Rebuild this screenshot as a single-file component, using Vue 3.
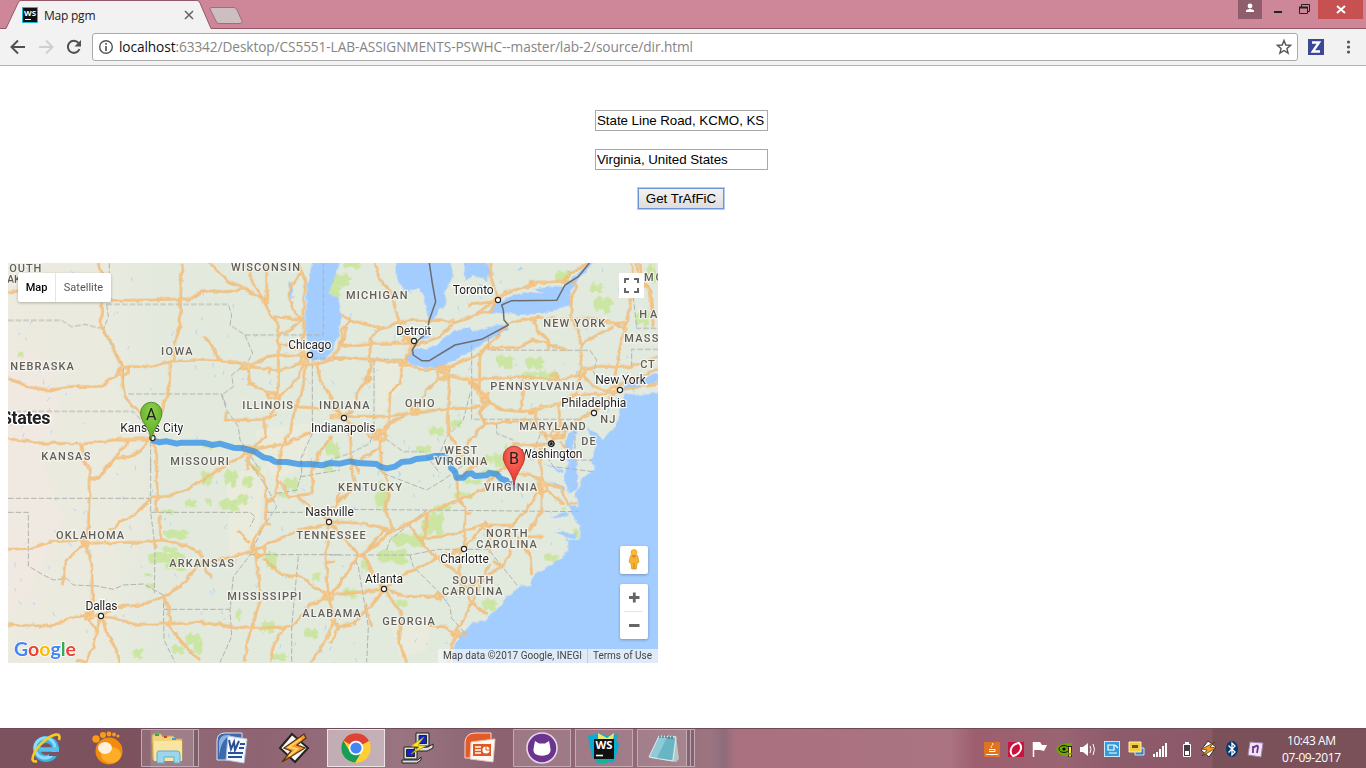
<script setup>
// Map geometry is kept in thirds of a pixel, in four tiles.
const tiles = [
  {
    t: 'translate(0 780)',
    roads: [
      'M24 97L60 92', 'M290 9C300 30 305 30 308 42', 'M305 126L303 200L330 240L345 280L368 320L368 370L375 410L400 440L425 465L445 520',
      'M330 121L440 120L540 117L580 115L605 92L680 95L735 86', 'M547 9L543 70L540 200L525 240L523 305',
      'M24 355L90 382L150 393L200 380L305 379L350 345L368 320L450 320L520 303L600 300L700 305L750 318',
      'M610 230L640 255L655 300', 'M510 305L508 380L490 440L465 500L452 535',
      'M24 535L100 548L245 552L340 540L450 535', 'M245 552L250 585L268 630',
      'M450 535L430 565L390 590L345 595', 'M385 540L345 595L310 630', 'M455 545L470 580L470 630',
      'M630 9L680 60L740 90L790 120L810 160L835 190L835 410', 'M735 9L760 70L800 130L800 9',
      'M815 170L905 178L870 210L835 225', 'M905 178L875 140L863 105L875 75L905 35L918 70L912 120L910 240L915 300', 'M895 9L905 35',
      'M735 318L835 330L870 325L915 305', 'M750 318L800 290L835 285L915 285', 'M745 320L748 370L800 395L835 410',
      'M835 250L910 270', 'M915 305L890 360L840 410L820 450L795 480L795 530L755 570',
      'M920 310L905 400L885 440L870 520L840 570L840 630', 'M680 455L675 480L700 480L795 478L830 460',
      'M885 440L960 445', 'M915 310L960 312L1000 290L1025 255L1040 200', 'M950 310L960 360L1030 470',
      'M755 570L860 550L935 515', 'M755 570L690 610L650 630', 'M755 570L745 600L740 630', 'M1000 530L960 570L940 630',
      'M355 325h30v18h-34z', 'M725 312h22v14h-20z', 'M800 398h35v16h-30z', 'M728 560h34v20h-30z', 'M902 280h18v30h-14z', 'M810 330v12', 'M490 420v25M355 540h90',
    ],
    borders: [
      'M328 9V120', 'M24 181L185 181L215 200L255 193L300 205', 'M320 133L685 133L695 165L690 195L735 225L970 225L970 10',
      'M320 133L325 170L310 210L370 320L370 390', 'M385 402L665 402L680 440', 'M24 454L400 454L440 500L452 535V630',
      'M735 225L758 280L740 310L695 345L700 380L665 405L680 450L715 500L720 540L780 630', 'M937 310L937 520L900 600L905 630', 'M937 295H1040',
    ],
    greens: [[60, 285, 20, 18], [320, 55, 10, 10], [625, 560, 30, 14], [770, 625, 30, 20], [1000, 570, 40, 50], [985, 620, 30, 40]],
  },
  {
    t: 'translate(990 780)',
    roads: [
      'M135 9L150 60L185 100L205 180L225 235L245 250', 'M480 9L485 60L505 118', 'M505 118L470 140L430 165L370 190L330 230L290 245L240 258',
      'M505 110L560 88L620 70L700 58L740 28L775 9', 'M415 135L490 125L530 95', 'M430 165L480 155L500 125', 'M35 165L60 180L150 205L245 180L370 183',
      'M60 180L35 210L30 260L0 300', 'M150 205L120 240L120 330L110 360L80 400L78 440L42 470', 'M30 260L120 250L245 250',
      'M0 295L120 297L220 308L270 328L340 330L450 280L490 240L535 190', 'M340 345L440 360L560 350L680 360L755 345',
      'M245 255L220 308L210 370L180 400L175 490L150 530', 'M450 270L448 380L460 410', 'M535 190L620 172L700 178L790 175L850 190L890 210',
      'M610 172L620 210L655 240L655 270', 'M460 265L560 262L610 240L655 250L710 270', 'M600 68L730 62L740 80L725 110L722 170L750 230L755 330',
      'M755 255L800 225L850 200', 'M905 9L910 80L885 210L870 260L860 320L850 375', 'M930 9L935 60L960 90L970 200', 'M890 210L880 190L830 188',
      'M345 345L360 380L355 420L355 520L400 590', 'M0 470L180 468L260 455L460 440L480 430L520 450L580 455L690 430L740 405L840 400L870 390',
      'M325 360L290 390L255 450L180 490L150 530', 'M370 350L410 355L455 405L485 435', 'M405 350L440 375L450 410', 'M680 360v-15h-20',
      'M580 360L582 390L570 450', 'M755 330L810 318L870 322L900 320L984 290', 'M755 340L790 380L840 395', 'M755 340L740 400L690 430L640 440L600 460',
      'M685 430L690 480L690 510L665 545', 'M465 440L445 460L470 490L590 480L655 530', 'M640 435L618 450L615 480L650 540',
      'M665 545L700 520L760 470L790 455L870 390L984 370', 'M470 488L420 540L375 600', 'M665 550L600 555L555 550L520 600', 'M630 560L632 630', 'M690 545L740 600',
      'M42 470L60 500L65 600L90 640', 'M0 470L40 470', 'M42 480L130 530L150 530L155 640', 'M155 560L90 600', 'M325 320h32v35h-32zM342 320v40M325 337h32',
      'M245 445h20v18h-20zM255 440v25', 'M135 515h30v22h-30zM145 520l10 25l16-20', 'M208 300h22v16h-22z', 'M215 240L235 230L250 250L235 280', 'M430 375L455 410L475 400L465 440L445 390',
      'M115 345l8 12l-12 12l-10-10z', 'M830 390l20-12l20 12l-20 12z', 'M750 325h18v15h-22z', 'M0 440L40 470M670 510h30v20h-40z', 'M920 9L925 60', 'M850 375L900 365L984 325',
    ],
    borders: [
      'M0 292L220 300', 'M132 300V510', 'M425 255V478H750L775 455', 'M475 230V270L780 271L800 300L790 335L810 370', 'M910 110L920 205L984 205', 'M905 320V268H984',
      'M420 400L400 480L350 530L330 580L290 600', 'M165 535L220 575L280 575L330 640', 'M130 510L120 550L60 580L0 600', 'M735 480V600H785', 'M500 490V520L550 540', 'M640 500L600 600',
    ],
    greens: [
      [30, 60, 70, 40], [10, 90, 50, 50], [70, 15, 55, 20], [225, 35, 40, 45], [700, 50, 50, 35], [800, 85, 45, 35], [820, 135, 60, 50], [940, 175, 40, 50],
      [525, 305, 55, 45], [615, 310, 60, 40], [600, 345, 50, 22], [670, 350, 40, 25], [640, 345, 30, 30], [320, 515, 50, 35], [380, 492, 40, 30], [283, 568, 50, 25],
      [0, 565, 30, 50], [535, 590, 30, 80], [505, 600, 30, 50], [475, 600, 30, 30], [410, 600, 30, 30], [965, 40, 25, 60],
    ],
  },
  {
    t: 'translate(0 1380)',
    roads: [
      'M245 0L267 20L267 90L265 240', 'M340 0L300 50L267 58', 'M468 0L472 105L468 155', 'M480 165L482 240',
      'M24 268L95 265L150 245L250 240L255 250L440 246L480 240L520 245L600 275L620 330L632 352',
      'M325 212L360 190L410 160L445 120L472 108L510 105L570 85L620 50L690 10', 'M255 250L195 305L187 375', 'M255 250L275 310L278 465',
      'M24 495L150 498L230 470L265 465L350 475L400 492L505 492L600 487L700 500L755 505L875 500L930 435L985 410L1020 400',
      'M300 465L290 520L280 560L260 605L230 600', 'M265 470L290 520', 'M310 475L325 530L350 570L360 607',
      'M310 462L355 440L425 435L490 410L540 380L600 310L680 295L765 270L830 240L890 215L985 190L1020 190',
      'M490 410L505 440L510 500L540 540L600 600', 'M740 0L790 50L800 120L795 185L750 265', 'M835 0L835 60L825 110L800 125',
      'M840 60L865 110L940 100L935 10', 'M890 110L985 180', 'M765 270L775 350L780 420L755 505L740 550L735 607', 'M715 212L750 250', 'M790 190L810 193',
      'M790 295L820 320L850 345L900 350L985 405', 'M985 190L978 300L985 410L1005 480L960 570L930 605', 'M850 505L820 560L810 607', 'M1020 100L985 180',
      'M245 240h18v18h-18zM258 458h20v16h-20zM265 470h40', 'M755 262h38v20l-20 10l-18-30zM465 245v15h10', 'M980 308L1004 304', 'M975 400h22v18h-20z',
    ],
    borders: [
      'M24 115H450', 'M24 157H85V318L130 345L160 360L200 355L220 375L290 378L340 388L370 375L430 372L490 405', 'M452 0V157L465 260L463 400',
      'M452 157H750L765 170L750 200', 'M490 405L492 540L525 607', 'M492 448H690', 'M740 0L800 80L830 140L790 200L750 285L700 350L690 448L695 530L660 607',
      'M750 284H1020', 'M800 157H915', 'M895 290L875 500V607', 'M905 0V50L960 40L1020 30', 'M830 100L890 90L905 40',
    ],
    greens: [
      [620, 55, 35, 50], [692, 55, 40, 55], [743, 65, 35, 35], [690, 135, 65, 40], [730, 120, 30, 35], [572, 130, 35, 25], [625, 125, 18, 30],
      [500, 155, 40, 15], [530, 222, 80, 30], [500, 295, 120, 40], [530, 320, 70, 30], [510, 270, 50, 20], [875, 75, 45, 45], [848, 105, 30, 20],
      [815, 300, 40, 55], [950, 350, 30, 30], [715, 465, 15, 30], [805, 500, 40, 45], [580, 540, 50, 45], [535, 570, 40, 30], [415, 580, 30, 40],
      [450, 378, 25, 20], [445, 345, 20, 12], [935, 520, 45, 30], [840, 592, 50, 30], [595, 560, 30, 50],
    ],
  },
  {
    t: 'translate(990 1380)',
    roads: [
      'M60 0L75 80L30 120L0 150', 'M0 185L100 190L190 210L235 190L300 155L385 120L460 90L490 50L530 20', 'M160 30L180 80L165 150L190 210L120 270L90 285',
      'M0 190L45 240L85 285L105 290L130 350L160 385', 'M190 210L160 212L105 280', 'M85 285L30 370L0 405', 'M380 50L385 120L405 140L402 265', 'M402 160h20',
      'M235 190L265 235L330 230L400 215L455 195L545 195L600 140L637 70', 'M285 235L290 155', 'M265 235L325 300L390 340L420 420L470 465',
      'M162 385L230 340L300 305L325 290L402 265L460 200', 'M162 385L215 405L325 410L420 380L500 330L525 310L545 260L540 195', 'M0 405L100 395L162 388L120 440L70 490L30 500L0 480',
      'M30 500L0 550', 'M162 388L215 460L205 540L230 607', 'M290 495L340 500L380 520L410 523', 'M480 310L440 400L400 480L375 520L355 607',
      'M632 0L637 70L635 150L600 210', 'M560 230L600 290L605 345', 'M590 230L640 230', 'M637 70L690 80L712 130L740 128', 'M650 90L700 130', 'M640 65L600 45L560 40L545 0',
      'M470 190L480 280', 'M390 270L390 380', 'M105 430L120 480L125 500', 'M452 200l15-15l16 15l-14 12zM628 68h22v25l-18 10z', 'M365 515h22v12h-22z', 'M455 0L390 50', 'M320 402h12v14h-12z', 'M490 300L515 320',
    ],
    borders: [
      'M0 148L290 150L745 155', 'M0 285L240 285L325 268L475 268L565 380', 'M75 300L85 320L115 500L110 607', 'M240 285L250 320L330 400L360 440L365 475L410 525', 'M160 40L290 90L340 60L420 0',
      'M170 270L180 240L290 150', 'M640 -30L670 20L790 35',
    ],
    greens: [
      [155, 125, 40, 60], [165, 95, 30, 50], [320, 190, 50, 80], [240, 240, 110, 45], [190, 290, 100, 50], [290, 200, 30, 50], [340, 145, 55, 25], [400, 105, 60, 22],
      [215, 430, 35, 25], [480, 435, 45, 45], [665, 295, 45, 25], [705, 222, 30, 12], [740, 220, 18, 28], [703, 145, 12, 15], [60, 400, 45, 30], [105, 315, 22, 35],
      [430, 65, 60, 18], [480, 35, 60, 18], [150, 75, 20, 25], [530, 10, 30, 25],
    ],
  },
]
const blob = ([x, y, w, h]) => {
  const k = [[-.5, -.25], [-.2, -.5], [.05, -.3], [.28, -.48], [.5, -.12], [.32, .08], [.45, .35], [.1, .5], [-.08, .22], [-.35, .42], [-.48, .1]]
  return 'M' + k.map(([a, b]) => `${x + a * w} ${y + b * h}`).join('L') + 'Z'
}
// Small streams and ponds scattered over the land.
let seed = 41
const rnd = () => (seed = (seed * 16807) % 2147483647) / 2147483647
const ponds = Array.from({ length: 260 }, () => {
  const x = 24 + rnd() * 1900, y = 789 + rnd() * 1200
  return `M${x} ${y}l${rnd() * 12 - 6} ${rnd() * 8 + 2}l${rnd() * 12 - 5} ${rnd() * 8}`
}).join('')

const states = [
  ['OUTH', 9.3, 272, 32], ['AK', 7, 283, 14], ['WISCONSIN', 231, 271, 69], ['IOWA', 161, 355, 31.5], ['NEBRASKA', 10.3, 370, 63.5], ['ILLINOIS', 242.3, 409, 50.5],
  ['INDIANA', 319, 409, 50.5], ['KANSAS', 41.3, 460, 49], ['MISSOURI', 170.3, 465, 58.5], ['MICHIGAN', 346, 299, 61.5], ['NEW YORK', 543.3, 327, 62],
  ['MASS', 624.3, 342, 34], ['HA', 639.3, 318, 18], ['CT', 640.3, 368, 14.5], ['MO', 644, 281, 19], ['PENNSYLVANIA', 490.3, 390, 93], ['OHIO', 405, 407, 29.5],
  ['MARYLAND', 519.3, 430, 66.5], ['NJ', 600.3, 423, 15], ['DE', 581.3, 445, 14.5], ['WEST', 444.3, 454, 33], ['VIRGINIA', 434.7, 464.5, 52.5],
  ['OKLAHOMA', 56, 539, 68], ['ARKANSAS', 169.3, 567, 64.5], ['MISSISSIPPI', 227.3, 600, 74], ['ALABAMA', 302.3, 617, 58.5], ['TENNESSEE', 296.3, 539, 69.5],
  ['KENTUCKY', 338, 491, 64], ['VIRGINIA', 484, 491, 53], ['NORTH', 486, 537, 41.5], ['CAROLINA', 476.3, 548, 60.5], ['SOUTH', 452.3, 584, 41], ['CAROLINA', 442, 594.8, 60.5], ['GEORGIA', 382.3, 625, 52.5],
]
const cities = [
  ['Chicago', 288.3, 349.3, 43, 310, 355], ['Toronto', 452.7, 294, 41, 498, 300], ['Detroit', 396.3, 335, 35, 414, 341], ['New York', 595.3, 384, 50.5, 620, 390],
  ['Philadelphia', 561.3, 407, 65, 594, 413], ['Washington', 521, 458.2, 61.5, 551.3, 443.7], ['Indianapolis', 311, 432, 64.5, 344, 418],
  ['Kansas City', 120.3, 432, 63, 152.5, 438], ['Nashville', 305.3, 516, 48.5, 329, 522], ['Dallas', 85.5, 610, 32, 101, 616], ['Atlanta', 365, 583, 38, 384, 589], ['Charlotte', 440.3, 563, 48.5, 464, 549],
]
</script>

<template>
  <div class="window">
    <header class="tabs">
      <svg class="tab-shape" width="260" height="30" viewBox="0 0 260 30">
        <path d="M0 28.5H6L18 3Q19 .5 21 .5H197Q199 .5 200 3L211 28.5H260V30H0Z" fill="#f2f2f2" />
        <path d="M0 28.5H6L18 3Q19 .5 21 .5H197Q199 .5 200 3L211 28.5H260" fill="none" stroke="#95596a" />
        <path d="M212 7.5H234Q236 7.5 237 10L242 21Q243 23.5 240 23.5H219Q217 23.5 216 21L210 9Q209 7.5 212 7.5Z" fill="#cdbec2" stroke="#a56b7b" />
        <rect x="22" y="7" width="16" height="16" fill="#22b4d6" /><rect x="23" y="8" width="14" height="14" fill="#111" />
        <text x="24" y="16" font-size="7.5" font-weight="700" fill="#fff" textLength="12" lengthAdjust="spacingAndGlyphs">WS</text><path d="M25 19.5H31" stroke="#fff" />
        <text x="44" y="19.5" font-size="12" fill="#222" textLength="51.5">Map pgm</text>
        <path d="M185 11L193 19M193 11L185 19" stroke="#666" stroke-width="1.6" />
      </svg>
      <div class="controls">
        <div class="user"><svg width="24" height="19"><circle cx="12" cy="6" r="2.4" fill="#fff" /><path d="M8 12V10.5Q9 9 12 9T16 10.5V12Z" fill="#fff" /></svg></div>
        <svg width="56" height="19"><path d="M12 12H20" stroke="#222" stroke-width="2" /><path d="M37.5 7.5H45.5V13.5H37.5Z M39.5 7V4.5H47.5V11.5H46" fill="none" stroke="#222" /><path d="M37 7.5H46" stroke="#222" stroke-width="2" /></svg>
        <div class="close"><svg width="45" height="19"><path d="M19 6L27 13M27 6L19 13" stroke="#fff" stroke-width="2" /></svg></div>
      </div>
    </header>
    <nav class="toolbar">
      <svg width="92" height="36" fill="none">
        <path d="M25 18H12M18 11.5L11.5 18L18 24.5" stroke="#505050" stroke-width="2" />
        <path d="M39 18H52M46 11.5L52.5 18L46 24.5" stroke="#cfcfcf" stroke-width="2" />
        <path d="M78.5 14A6 6 0 1 0 79.5 20" stroke="#505050" stroke-width="2" /><path d="M81 11V17.5H74.5Z" fill="#505050" />
      </svg>
      <div class="url">
        <svg width="26" height="26" fill="none"><circle cx="13" cy="13" r="6.3" stroke="#555" stroke-width="1.4" /><path d="M13 12V17M13 9V10.7" stroke="#555" stroke-width="1.7" /></svg>
        <svg class="address" width="600" height="26"><text x="0" y="18" font-size="13.7" fill="#858585" textLength="574"><tspan fill="#111">localhost</tspan>:63342/Desktop/CS5551-LAB-ASSIGNMENTS-PSWHC--master/lab-2/source/dir.html</text></svg>
        <svg class="star" width="26" height="26"><path d="M13 6.5L14.8 11L19.6 11.3L15.9 14.4L17.1 19.1L13 16.5L8.9 19.1L10.1 14.4L6.4 11.3L11.2 11Z" fill="none" stroke="#555" stroke-width="1.4" /></svg>
      </div>
      <svg width="68" height="36">
        <rect x="10" y="10" width="16" height="16" fill="#3b4799" /><path d="M14 13.5H21L14.8 22.5H22" fill="none" stroke="#fff" stroke-width="2.4" />
        <g fill="#555"><circle cx="50.5" cy="13" r="1.6" /><circle cx="50.5" cy="18" r="1.6" /><circle cx="50.5" cy="23" r="1.6" /></g>
      </svg>
    </nav>

    <main>
      <form class="form" @submit.prevent>
        <input value="State Line Road, KCMO, KS"><input value="Virginia, United States">
        <button type="submit">Get TrAfFiC</button>
      </form>
      <section class="map">
        <svg width="650" height="400" viewBox="24 789 1950 1200" class="canvas">
          <defs>
            <filter id="rough" filterUnits="userSpaceOnUse" x="0" y="760" width="2000" height="1260" color-interpolation-filters="sRGB"><feTurbulence type="fractalNoise" baseFrequency=".04" numOctaves="2" seed="3" /><feDisplacementMap in="SourceGraphic" scale="15" xChannelSelector="R" yChannelSelector="G" /></filter>
            <linearGradient id="land" x2="1" y2="0"><stop offset="0" stop-color="#eeeae2" /><stop offset=".13" stop-color="#eaebdf" /><stop offset=".25" stop-color="#e3e9dd" /><stop offset="1" stop-color="#e2e9de" /></linearGradient>
            <radialGradient id="pinA" cy=".25"><stop stop-color="#91d04d" /><stop offset="1" stop-color="#67b72e" /></radialGradient>
            <radialGradient id="pinB" cy=".25"><stop stop-color="#ff776b" /><stop offset="1" stop-color="#ed4237" /></radialGradient>
          </defs>
          <rect x="24" y="789" width="1950" height="1200" fill="url(#land)" />
          <path d="M24 780H300L310 1000L350 1160L430 1350L450 1540L400 1700L270 1850L260 1990H24Z" fill="#ebeade" opacity=".5" />
          <path d="M24 1040L120 1060L180 1200L130 1400L190 1550L90 1780L24 1850Z" fill="#f1e8e2" opacity=".6" />
          <path d="M1125 1085L1210 1095L1200 1170L1130 1260ZM760 1290L930 1270L920 1400L820 1440ZM680 1420L800 1400L770 1620L690 1700ZM1170 1870L1300 1850L1280 1950L1200 1970Z" fill="#ebebdc" opacity=".8" />
          <path :d="ponds" fill="none" stroke="#a3ccff" stroke-width="2.2" />
          <g filter="url(#rough)">
            <g v-for="t in tiles" :key="'g' + t.t" :transform="t.t" fill="#cbe6a3"><path v-for="(g, i) in t.greens" :key="i" :d="blob(g)" /></g>
            <g fill="#a3ccff" transform="translate(990 780)">
              <path d="M-50 -10L32 -10L15 50L-5 100L25 110L35 170L25 220L10 270L-15 300L-55 305L-62 270L-75 210L-68 80Z" />
              <path d="M195 -10L198 55L228 98L245 88L265 80L280 110L292 165L300 190L345 130L345 90L372 45L355 -10L225 -10Z" />
              <path d="M395 -10L408 60L425 48L450 52L470 62L482 40L465 -10Z" /><path d="M262 222L300 210L300 232L272 240Z" />
              <path d="M225 295L242 262L290 268L330 245L370 215L420 203L430 215L490 197L535 192L530 210L480 235L440 265L360 308L320 325L280 322L240 310Z" />
              <path d="M470 155L500 130L545 108L590 95L640 100L610 85L660 78L700 80L740 45L785 -5L800 -5L750 52L722 90L722 135L640 160L560 165L520 160Z" />
              <path d="M-120 60L-110 90L-115 120L-125 100ZM905 30L915 60L908 90ZM450 75L480 90L460 95ZM570 20L580 30L565 32Z" />
              <path d="M1010 402L930 403L885 402L878 420L868 470L855 500L815 540L790 515L770 498L782 530L798 560L785 600L795 625L770 640L752 670L735 700L745 740L715 735L735 780L752 800L750 835L710 840L715 870L690 898L660 915L625 938L605 955L600 975L565 980L530 1010L500 1050L465 1080L425 1090L395 1120L375 1150L365 1235H1010Z" />
              <path d="M735 498L705 540L708 590L715 610L700 650L715 700L738 690L745 650L738 600L728 560L742 515ZM640 610L700 630L700 640ZM650 660L700 680L700 690ZM660 770L710 755L720 765L690 775ZM675 815L740 820L735 835L700 830Z" />
              <path d="M890 362L940 350L1000 338V358L930 380L880 390Z" />
            </g>
          </g>
          <g v-for="t in tiles" :key="'b' + t.t" :transform="t.t" class="border"><path v-for="d in t.borders" :key="d" :d="d" /></g>
          <g filter="url(#rough)">
            <g v-for="t in tiles" :key="'r' + t.t" :transform="t.t" class="road"><path v-for="d in t.roads" :key="d" :d="d" /></g>
            <g v-for="t in tiles" :key="'c' + t.t" :transform="t.t" class="core"><path v-for="d in t.roads" :key="d" :d="d" /></g>
          </g>
          <g transform="translate(990 780)" fill="none" stroke-linejoin="round">
            <path d="M298 9L307 70L317 125L298 180L290 220L265 240L247 270L250 285L275 302L298 302L375 255L455 238L535 195L522 180L520 150L515 135L545 122L680 121L705 75L745 50L778 9" stroke="#6c6e6e" stroke-width="4.5" />
            <path d="M-535 540L-512 547L-490 544L-460 551L-445 548L-380 548L-352 555L-330 551L-290 563L-260 565L-225 575L-200 592L-180 596L-165 605L-130 606L-90 613L-60 612L-25 616L0 609L30 611L60 604L85 609L140 612L150 620L170 625L195 620L215 606L240 604L258 597L290 594L315 588L345 588L360 605L364 625L375 635L380 653L400 653L412 642L425 640L435 648L470 646L478 639L500 642L512 656L530 662L530 670L552 674V686" stroke="#1f87e8" stroke-opacity=".7" stroke-width="18" />
          </g>
          <g transform="scale(3)">
            <text v-for="s in states" :key="s[0] + s[2]" class="state" :x="s[1]" :y="s[2]" :textLength="s[3]">{{ s[0] }}</text>
            <text class="nation" x="1" y="424.4" textLength="49.5">States</text>
            <g v-for="c in cities" :key="c[0]"><circle :cx="c[4]" :cy="c[5]" r="2.6" fill="#fff" stroke="#222" stroke-width="1.1" /><text class="city" :x="c[1]" :y="c[2]" :textLength="c[3]">{{ c[0] }}</text></g>
            <circle cx="551.3" cy="443.7" r="3" fill="none" stroke="#222" stroke-width=".8" /><circle cx="551.3" cy="443.7" r="1.6" fill="#222" />
            <g stroke-width=".8">
              <path d="M151.3 440C150 428 140.5 422 140.5 413A10.7 10.7 0 0 1 162 413C162 422 153 428 151.3 440Z" fill="url(#pinA)" stroke="#4c7827" />
              <path d="M514 485C512.7 472 503.2 466 503.2 457A10.7 10.7 0 0 1 524.7 457C524.7 466 515.7 472 514 485Z" fill="url(#pinB)" stroke="#a5342c" />
            </g>
            <text class="pin" x="151.3" y="419.5" text-anchor="middle">A</text><text class="pin" x="514" y="463.5" text-anchor="middle">B</text>
          </g>
        </svg>
        <div class="types"><b>Map</b><span>Satellite</span></div>
        <div class="full"><svg width="25" height="25"><path d="M6 10V6H10M15 6H19V10M19 15V19H15M10 19H6V15" fill="none" stroke="#666" stroke-width="2" /></svg></div>
        <div class="person"><svg width="28" height="28"><path d="M10.5 9.5H17.5L19 16L17 17.5L16.3 23H11.7L11 17.5L9 16Z" fill="#f5b32e" stroke="#cf8b1d" stroke-width=".6" /><circle cx="14" cy="6.5" r="3" fill="#fbbc2f" stroke="#cf8b1d" stroke-width=".5" /><path d="M11.5 9.5L14 12L16.5 9.5Z" fill="#e8792e" /><path d="M14 17V23" stroke="#b87718" stroke-width=".7" /></svg></div>
        <div class="zoom"><svg width="28" height="55"><path d="M9 13.5H19.500M14.300 8.5V18.5M9 41.5H19.500" stroke="#666" stroke-width="2.8" /><path d="M4 27.5H23" stroke="#e6e6e6" /></svg></div>
        <svg class="google" width="70" height="26"><text x="0" y="17.5" textLength="62" lengthAdjust="spacingAndGlyphs"><tspan fill="#4285f4">G</tspan><tspan fill="#ea4335">o</tspan><tspan fill="#fbbc05">o</tspan><tspan fill="#4285f4">g</tspan><tspan fill="#34a853">l</tspan><tspan fill="#ea4335">e</tspan></text></svg>
        <div class="credit"><svg width="220" height="14"><text x="5" y="10" textLength="139">Map data ©2017 Google, INEGI</text><path d="M149.5 0V14" stroke="#b5cfee" /><text x="155" y="10" textLength="59">Terms of Use</text></svg></div>
      </section>
    </main>

    <footer class="taskbar">
      <div class="slots">
        <div class="slot"><svg width="34" height="34"><circle cx="17" cy="18" r="9.5" fill="none" stroke="#3fb0e6" stroke-width="7" /><circle cx="16" cy="17" r="10" fill="none" stroke="#8ddcf8" stroke-width="3" /><path d="M10 18.500H30" stroke="#56c1ee" stroke-width="4.5" /><path d="M20 21H32V25H20Z" fill="#7c5461" /><path d="M8 30C-1 33 5 19 14 11C23 3 33 0 30 9" fill="none" stroke="#f7cb22" stroke-width="2.6" /></svg></div>
        <div class="slot"><svg width="34" height="34"><circle cx="18" cy="20" r="13.5" fill="#f28c0d" /><ellipse cx="20" cy="24" rx="10" ry="8" fill="#ffac28" /><ellipse cx="14" cy="17" rx="7" ry="6" fill="#fff0dd" /><g fill="#ff9b12"><circle cx="5" cy="8" r="3.7" /><circle cx="12" cy="4" r="3" /><circle cx="18" cy="3" r="2.4" /><circle cx="23" cy="3.5" r="1.9" /><circle cx="27" cy="5" r="1.6" /></g></svg></div>
        <div class="slot open stack"><svg width="34" height="34"><path d="M1 8V5Q1 3 3 3H10L12 6H16V5H22L25 8H31V29H2Z" fill="#efd27c" stroke="#c9a44c" /><path d="M3 10H31V30H3Z" fill="#f9e5a1" /><path d="M4 4H8" stroke="#2dab4b" stroke-width="2" /><path d="M13 6H16" stroke="#cf4030" stroke-width="2" /><path d="M21 8H25" stroke="#3a9bd8" stroke-width="2" /><path d="M6 32V22Q6 20 8 20H26Q29 20 29 23V32H23V26H13V32Z" fill="#9bd6ee" stroke="#5eafd0" /></svg></div>
        <div class="slot"><svg width="34" height="34"><path d="M2 29V10Q2 2 10 2H27V29Z" fill="#3d69ae" stroke="#d9e6f7" /><path d="M4 25V11Q5 4 12 4H16Q6 8 4 25Z" fill="#8ab2e3" /><path d="M13 5L32 8L29 32L11 29Z" fill="#f5f9ff" stroke="#b7c5dd" /><path d="M14 9L16 18L19 11L20 19L24 10M25 13H30M24 17H29M13 22H28M13 26H27" fill="none" stroke="#294f96" stroke-width="2" /></svg></div>
        <div class="slot"><svg width="34" height="34"><path d="M15 3L31 17L18 31L3 17Z" fill="#f7f7f7" stroke="#222" stroke-width="2" /><path d="M27 3L7 17L14 20L5 31L28 17L20 14L29 7Z" fill="#f59b27" stroke="#5d330f" stroke-width="1.3" /><path d="M24 8L12 16L20 18L12 25" fill="none" stroke="#ffd36a" stroke-width="2" /></svg></div>
        <div class="slot open active"><svg width="34" height="34"><circle cx="17" cy="17" r="14.7" fill="#ffd035" /><path d="M17 17L4.3 9.6A14.7 14.7 0 0 1 30 10Z" fill="#df4335" /><path d="M4.3 9.6A14.7 14.7 0 0 0 16 31.7L23 20L10.5 20Z" fill="#169e59" /><circle cx="17" cy="17" r="7.3" fill="#fff" /><circle cx="17" cy="17" r="5.6" fill="#4285f4" /></svg></div>
        <div class="slot"><svg width="34" height="34" stroke="#222"><g fill="#ddd"><path d="M15 2H28V15H15ZM13 17L27 16L32 13V17L26 20H14ZM3 16H16V28H3ZM1 29H17L20 26V29L16 32H1Z" /></g><path d="M18 4.5H25.5V12.5H18ZM5.5 18.5H13.5V25.5H5.5Z" fill="#1024ce" /><path d="M23 6L10 15L18 16L10 23L25 15L17 14Z" fill="#ffeb22" stroke="#a89008" stroke-width=".7" /></svg></div>
        <div class="slot"><svg width="34" height="34"><path d="M2 27V11Q3 2 12 2H28V27Z" fill="#e45b29" stroke="#ffd8c4" /><path d="M8 11L32 8L30 31L7 28Z" fill="#fff8f4" stroke="#e5c4b7" /><path d="M10 13H28V25H10Z" fill="#e4571f" /><path d="M12 16H18M12 19H18M12 22H18" stroke="#fff" stroke-width="1.6" /><circle cx="23" cy="19" r="3.6" fill="#fff" /><path d="M23 15V19H27" stroke="#e4571f" fill="none" /></svg></div>
        <div class="slot open"><svg width="34" height="34"><circle cx="17" cy="17" r="15" fill="#6b358f" stroke="#e5d5ec" stroke-width="1.6" /><path d="M10 10L14 12.5H20L24 10L25 15Q27 23 21.5 24Q17 25.4 12.5 24Q7 23 9 15Z" fill="#fff" /></svg></div>
        <div class="slot open"><svg width="34" height="34"><path d="M1 5L12 2L20 5L31 3L29 9L32 14L27 31L10 32L5 25L3 16Z" fill="#08add2" /><path d="M11 2L20 7L27 2L26 10H11Z" fill="#eee76b" /><path d="M7 26H24L18 33L10 30Z" fill="#12b791" /><path d="M7 8H27V28H7Z" fill="#111" /><text x="8.500" y="18" font-size="11" font-weight="700" fill="#fff" textLength="17" lengthAdjust="spacingAndGlyphs">WS</text><path d="M9 24.500H16" stroke="#fff" stroke-width="1.6" /></svg></div>
        <div class="slot open stack note"><svg width="34" height="34"><path d="M12 4L29 5L32 28L29 31L3 27Z" fill="#b9c6c4" /><path d="M12 5L29 6L26 30L2 26Z" fill="#8ecbd7" stroke="#e0e9eb" /><path d="M20 6L28 7L25 29L10 27Z" fill="#55a9bc" opacity=".65" /><path d="M13 4V7M16 4V7M19 4V7M22 5V8M25 5V8" stroke="#3d5056" /></svg></div>
      </div>
      <div class="tray">
        <svg width="300" height="40">
          <rect x="18" y="14" width="16" height="15" fill="#df731f" /><path d="M23 23.500H29V21.500H23M26 20C23 18 29 17 26 15M20 26.500H32" stroke="#fff" fill="none" />
          <rect x="42" y="14" width="16" height="15" fill="#c9133d" /><path d="M53 15C44 16 43 25 47 28C55 26 57 19 53 15Z" fill="none" stroke="#fff" stroke-width="2" />
          <path d="M67.5 14V29" stroke="#fff" stroke-width="1.5" /><path d="M68 14H74L76 17H81L78 23L74 22H68Z" fill="#fff" />
          <path d="M90 21Q94 14 106 15V28H97Q91 25 90 21Z" fill="#6ca800" /><ellipse cx="98" cy="21" rx="5" ry="3.5" fill="none" stroke="#111" /><circle cx="98" cy="21" r="1.5" /><path d="M104 18V25M104 26.5V29" stroke="#222" stroke-width="4" /><path d="M104 19V25M104 26.5V28.5" stroke="#ffe526" stroke-width="2.2" />
          <path d="M114 19H117L122 15V28L117 24H114Z" fill="#fff" /><path d="M124 18Q126 21 124 25M127 16Q130 21 127 27" fill="none" stroke="#fff" />
          <rect x="138.500" y="13.500" width="15" height="15" fill="#359bd9" stroke="#c8e7fa" /><path d="M142 17H148V22H142ZM143 25H151M149 17L152 20" fill="none" stroke="#fff" stroke-width="1.2" />
          <path d="M169 20H178V27H169Z" fill="#3481d8" stroke="#c5e4ff" /><path d="M163 14H175V24H163Z" fill="#f4cb3b" stroke="#fff0a1" /><path d="M166 17H172V20H166Z" fill="#5d571f" />
          <g fill="#fff"><path d="M187 26h2v3h-2zM190 24h2v5h-2zM193 21h2v8h-2zM196 18h2v11h-2zM199 15h2v14h-2z" /></g>
          <path d="M217.5 16.5H224.500V28.5H217.5Z" fill="#463841" stroke="#fff" /><path d="M219 15H223" stroke="#fff" stroke-width="2" /><path d="M219 23H223V27H219Z" fill="#fff" />
          <path d="M242 13L250 19L243 29L235 22Z" fill="#fff" stroke="#333" /><path d="M249 14L236 21L241 22L236 28L250 20L244 19Z" fill="#f49b26" stroke="#5a370f" stroke-width=".8" />
          <ellipse cx="266" cy="21" rx="6" ry="8" fill="#073a70" /><path d="M262.500 17.500L269 24L266 27V15L269 18L262.500 24.500" fill="none" stroke="#fff" stroke-width="1.3" />
          <path d="M284 14L297 15L295 29L282 27Z" fill="#eee5f4" stroke="#a080b1" /><path d="M287 25V18M287 20Q292 16 292 19L291 25" fill="none" stroke="#75348c" stroke-width="1.8" />
        </svg>
        <div class="clock"><svg width="100" height="40" fill="#fff" font-size="12"><text x="21" y="17" textLength="49">10:43 AM</text><text x="16" y="34" textLength="59">07-09-2017</text></svg></div>
      </div>
    </footer>
  </div>
</template>

<style>
body { margin: 0; background: #fff; }
</style>
<style scoped>
.window { width: 1366px; height: 768px; display: flex; flex-direction: column; overflow: hidden; font-family: "Open Sans", sans-serif; background: #fff; }
svg { display: block; flex: none; }
.tabs { height: 29px; background: #cd8798; box-shadow: inset 0 -1px #95596a; display: flex; justify-content: space-between; flex: none; }
.controls { display: flex; height: 19px; padding-right: 3px; }
.user { background: #8f5e6c; }
.close { background: #c75050; }
.toolbar { height: 37px; box-sizing: border-box; border-bottom: 1px solid #b5b5b5; background: #f2f2f2; display: flex; flex: none; }
.url { flex: 1; height: 28px; margin-top: 4px; box-sizing: border-box; border: 1px solid #aaa; border-radius: 3px; background: #fff; display: flex; }
.star { margin-left: auto; }
main { flex: 1; display: flex; flex-direction: column; }
.form { height: 197px; box-sizing: border-box; padding: 44px 3px 0 0; display: flex; flex-direction: column; align-items: center; gap: 18px; flex: none; }
input { width: 173px; height: 21px; box-sizing: border-box; padding: 1px 0 1px 1px; border: 1px solid #a9a9a9; font: 13.33px "Liberation Sans", Arial, sans-serif; letter-spacing: -.04px; color: #000; }
button { width: 88px; height: 23px; margin: -1px 1px 0 0; box-sizing: border-box; padding: 0; border: 1px solid #b5cdf2; box-shadow: inset 0 0 0 1px #6d95d5; background: linear-gradient(#f4f4f4, #dcdcdc); font: 13.33px "Liberation Sans", Arial, sans-serif; color: #000; }
.map { position: relative; width: 650px; height: 400px; margin-left: 8px; overflow: hidden; font-family: Roboto, sans-serif; }
.border { fill: none; stroke: #b0b3ae; stroke-width: 3; stroke-dasharray: 17 6; }
.road { fill: none; stroke: #eeb36c; stroke-width: 7; stroke-linejoin: round; }
.core { fill: none; stroke: #fad7a0; stroke-width: 2.4; stroke-linejoin: round; }
.state { font-size: 11px; font-weight: 500; fill: #625f5a; stroke: #f5f5ef; stroke-width: 2.4px; stroke-opacity: .85; paint-order: stroke; }
.city { font-size: 12px; fill: #1e1e1e; stroke: #fff; stroke-width: 2.4px; stroke-opacity: .85; paint-order: stroke; }
.nation { font-size: 18px; font-weight: 700; fill: #222; stroke: #fff; stroke-width: 2.5px; paint-order: stroke; }
.pin { font-size: 16px; fill: #222; }
.types { position: absolute; left: 10px; top: 10px; height: 29px; width: 93px; display: flex; background: #fff; border-radius: 2px; box-shadow: 0 1px 3px #0004; font-size: 11px; line-height: 29px; color: #565656; }
.types b { width: 37px; border-right: 1px solid #e6e6e6; text-align: center; font-weight: 500; color: #000; }
.types span { flex: 1; text-align: center; }
.full { position: absolute; left: 611px; top: 10px; background: #fff; }
.person, .zoom { position: absolute; left: 612px; background: #fff; border-radius: 2px; box-shadow: 0 1px 3px #0004; }
.person { top: 283px; }
.zoom { top: 321px; }
.google { position: absolute; left: 6px; top: 375px; font: 700 19px Lato, sans-serif; paint-order: stroke; stroke: #fff; stroke-width: 1.5px; }
.credit { position: absolute; right: 0; bottom: 0; background: #f5f5f5b8; font-size: 10px; fill: #444; }
.taskbar { height: 40px; flex: none; display: flex; justify-content: space-between; box-sizing: border-box; box-shadow: inset 0 1px #704b57; background: linear-gradient(90deg, #7c525f 0 150px, #906b77 151px, #8f6472 260px, #987581 400px, #8c6271 500px, #916875 630px, #9c7580 710px, #8f6b7b 724px, #aa7180 736px, #ab7482 950px, #9d5e6e 975px, #9a6473 1060px, #8d5c6b 1110px, #8b5868 1212px, #7a5059 1213px); }
.slots { display: flex; padding-left: 15px; }
.slot { width: 58px; height: 38px; margin: 1px 2px 0; box-sizing: border-box; display: flex; align-items: center; justify-content: center; }
.open { border: 1px solid #c5a9b2; background: #ffffff24; }
.active { background: #ffffff70; border-color: #eee2e6; }
.stack { justify-content: flex-start; padding-left: 9px; box-shadow: inset -4px 0 #7c606b, inset -5px 0 #c5a9b2; }
.note { box-shadow: inset -3px 0 #806470, inset -4px 0 #c5a9b2, inset -7px 0 #806470, inset -8px 0 #c5a9b2; }
.tray { display: flex; }
.clock { width: 100px; }
</style>
